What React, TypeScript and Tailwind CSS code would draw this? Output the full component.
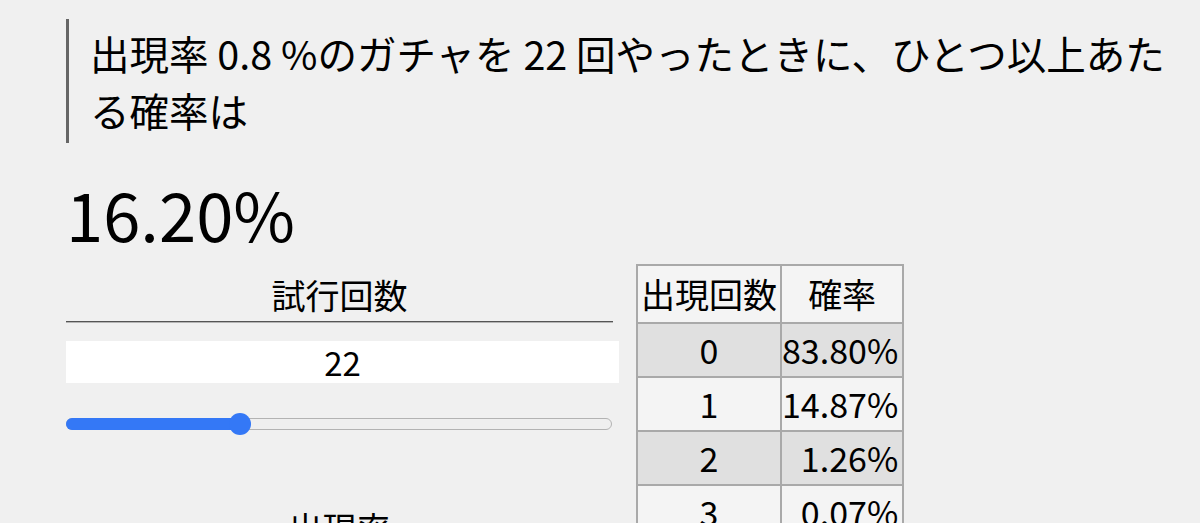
import React, { useState } from 'react';

const font = "font-['Noto_Sans_CJK_JP','Noto_Sans',sans-serif]";

// 二項分布: n回引いて k 回あたる確率
function binom(n: number, k: number, p: number): number {
  let c = 1;
  for (let i = 0; i < k; i++) c = (c * (n - i)) / (i + 1);
  return c * Math.pow(p, k) * Math.pow(1 - p, n - k);
}

const pct = (v: number) => `${(v * 100).toFixed(2)}%`;

interface ControlProps {
  label: string;
  value: number;
  min: number;
  max: number;
}

const Control: React.FC<ControlProps> = ({ label, value, min, max }) => {
  const ratio = ((value - min) / (max - min)) * 100;
  return (
    <div className="flex flex-col">
      <div className="mr-[6px] h-[54px] border-b border-[#555] pt-[1px] text-center text-[34px] leading-[51px] shadow-[0_1px_0_#b5b5b5]">
        {label}
      </div>
      <div className="mt-[19px] h-[42px] bg-white text-center text-[33px] leading-[42px]">{value}</div>
      <div className="relative mr-[7px] mt-[35px] h-[12px] rounded-full border border-[#b3b3b3] bg-[#efefef]">
        <div className="absolute -left-px -top-px h-[12px] rounded-l-full bg-[#3478f6]" style={{ width: `${ratio}%` }} />
        <div
          className="absolute top-1/2 h-[22px] w-[22px] -translate-x-1/2 -translate-y-1/2 rounded-full bg-[#3478f6]"
          style={{ left: `${ratio}%` }}
        />
      </div>
    </div>
  );
};

export default function App() {
  const [trials] = useState(22);
  const [rate] = useState(0.8);
  const p = rate / 100;
  const atLeastOne = 1 - Math.pow(1 - p, trials);
  const rows = Array.from({ length: trials + 1 }, (_, k) => ({ k, v: binom(trials, k, p) }));

  return (
    <div className={`min-h-screen bg-[#f0f0f0] pl-[66px] pr-[20px] pt-[19px] text-black ${font}`}>
      {/* 問題文 */}
      <blockquote className="border-l-[3px] border-[#666] py-[5px] pl-[21px] text-[39.5px] leading-[57px]">
        出現率 {rate} %のガチャを {trials} 回やったときに、ひとつ以上あたる確率は
      </blockquote>

      <div className="mt-[30px] text-[67px] leading-[80px]">{pct(atLeastOne)}</div>

      <div className="mt-[11px] flex items-start gap-[17px]">
        <div className="flex w-[553px] flex-col pt-[4px]">
          <Control label="試行回数" value={trials} min={1} max={67} />
          <div className="mt-[71px]">
            <Control label="出現率" value={rate} min={0.1} max={10} />
          </div>
        </div>

        <table className="border-collapse text-[34px]">
          <thead>
            <tr className="bg-[#f4f4f4]">
              <th className="h-[58px] w-[144px] border-2 border-[#a9a9a9] px-[2px] font-normal leading-[52px]">出現回数</th>
              <th className="w-[122px] border-2 border-[#a9a9a9] px-[2px] font-normal leading-[52px]">確率</th>
            </tr>
          </thead>
          <tbody>
            {rows.map(({ k, v }) => (
              <tr key={k} className={k % 2 === 0 ? 'bg-[#e0e0e0]' : 'bg-[#f4f4f4]'}>
                <td className="h-[54px] border-2 border-[#a9a9a9] text-center leading-[50px]">{k}</td>
                <td className="border-2 border-[#a9a9a9] pr-[4px] text-right leading-[50px]">{pct(v)}</td>
              </tr>
            ))}
          </tbody>
        </table>
      </div>
    </div>
  );
}
